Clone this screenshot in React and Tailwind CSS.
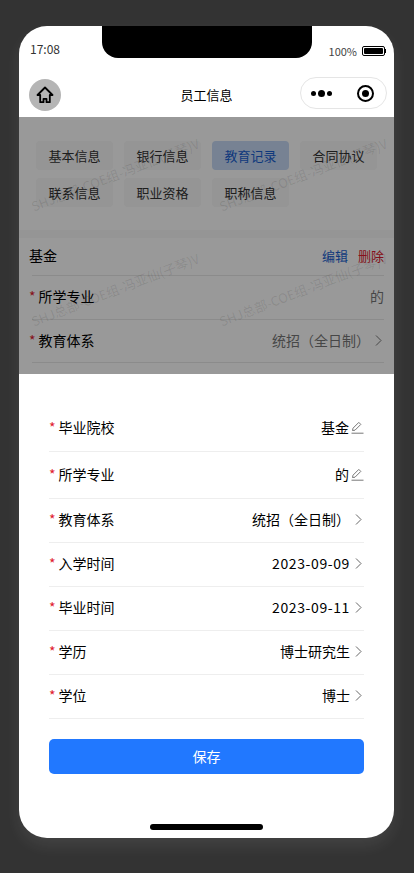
import React from 'react';

const font = { fontFamily: '"Noto Sans CJK SC", "Liberation Sans", sans-serif' };

const tabs = ['基本信息', '银行信息', '教育记录', '合同协议', '联系信息', '职业资格', '职称信息'];

const rows = [
  { label: '毕业院校', value: '基金', edit: true, h: 'h-[47px]' },
  { label: '所学专业', value: '的', edit: true, h: 'h-[47px]' },
  { label: '教育体系', value: '统招（全日制）', h: 'h-[44px]' },
  { label: '入学时间', value: '2023-09-09', date: true, h: 'h-[44px]' },
  { label: '毕业时间', value: '2023-09-11', date: true, h: 'h-[44px]' },
  { label: '学历', value: '博士研究生', h: 'h-[44px]' },
  { label: '学位', value: '博士', h: 'h-[44px]' },
];

const Watermark = ({ className }) => (
  <div className={`absolute text-[13px] leading-[20px] whitespace-nowrap text-black/10 -rotate-[21deg] origin-left ${className}`}>
    SHJ总部-COE组-冯亚仙(子琴)V
  </div>
);

const HomeIcon = () => (
  <svg width="18" height="18" viewBox="0 0 18 18" fill="none" stroke="#000" strokeWidth="1.8" strokeLinejoin="round">
    <path d="M9 1.5 1.5 9H4.2v7.2h3.3v-3.4h3v3.4h3.3V9h2.7z" />
  </svg>
);

const PenIcon = () => (
  <svg width="13" height="13" viewBox="0 0 13 13" fill="none" stroke="#777" strokeWidth="1">
    <path d="M1.5 9.5 2 7.2 7.8 1.4l2 2L4 9.2z" />
    <path d="M0.5 12.2h12" />
  </svg>
);

const Chevron = ({ color = '#666' }) => (
  <svg width="7" height="11" viewBox="0 0 7 11" fill="none" stroke={color} strokeWidth="1" className="mr-[2px]">
    <path d="M1 .5l5 5-5 5" />
  </svg>
);

const Battery = () => (
  <div className="flex items-center">
    <div className="w-[23px] h-[10px] border border-black rounded-[2px] p-[1px]">
      <div className="w-full h-full bg-black rounded-[1px]" />
    </div>
    <div className="w-[1px] h-[4px] bg-black" />
  </div>
);

const Capsule = () => (
  <div className="w-[87px] h-[32px] mt-[3px] border border-[#e5e5e5] rounded-full flex items-center justify-between pl-[10px] pr-[12px]">
    <div className="flex items-center gap-[2px]">
      <div className="w-[5px] h-[5px] rounded-full bg-black" />
      <div className="w-[7px] h-[7px] rounded-full bg-black" />
      <div className="w-[5px] h-[5px] rounded-full bg-black" />
    </div>
    <div className="w-[17px] h-[17px] rounded-full border-2 border-black flex items-center justify-center">
      <div className="w-[7px] h-[7px] rounded-full bg-black" />
    </div>
  </div>
);

const App = () => {
  return (
    <div className="w-[414px] h-[873px] bg-[#333333] pt-[26px] pl-[19px] overflow-hidden" style={font}>
      <div className="relative w-[375px] h-[812px] bg-white rounded-[28px] overflow-hidden flex flex-col shadow-[0_8px_16px_rgba(255,255,255,0.08)]">
        {/* 刘海 */}
        <div className="absolute top-0 left-[83px] w-[210px] h-[32px] bg-black rounded-b-[16px]" />

        <div className="h-[40px] flex justify-between px-[11px] shrink-0">
          <span className="text-[12px] leading-[16px] text-[#333] mt-[15px]">17:08</span>
          <div className="flex items-center gap-[5px] mt-[17px] h-[16px] mr-[-3px]">
            <span className="text-[11px] text-[#444]">100%</span>
            <Battery />
          </div>
        </div>

        <div className="h-[51px] relative flex items-center justify-between pl-[10px] pr-[7px] shrink-0">
          <div className="w-[32px] h-[32px] rounded-full bg-[#b5b5b5] flex items-center justify-center mt-[7px]">
            <HomeIcon />
          </div>
          <span className="absolute left-0 right-0 text-center text-[13px] text-black mt-[6px]">员工信息</span>
          <Capsule />
        </div>

        {/* 遮罩下的页面 */}
        <div className="relative h-[257px] shrink-0 overflow-hidden bg-white">
          <div className="grid grid-cols-[77px_77px_77px_77px] content-start gap-x-[11px] gap-y-[8px] pl-[17px] pt-[24px] h-[113px]">
            {tabs.map((t) => (
              <div
                key={t}
                className={`h-[29px] rounded-[4px] flex items-center justify-center text-[13px] ${t === '教育记录' ? 'bg-[#c6d9f5] text-[#1a5fd0]' : 'bg-[#f8f8f8] text-[#333]'}`}
              >
                {t}
              </div>
            ))}
          </div>
          <div className="h-[8px] bg-[#f8f8f8]" />
          <div className="flex items-center justify-between h-[37px] pl-[10px] pr-[10px] pb-[2px]">
            <span className="text-black text-[14px]">基金</span>
            <div className="flex gap-[10px] text-[13px]">
              <span className="text-[#1a5fd0]">编辑</span>
              <span className="text-[#e01b2f]">删除</span>
            </div>
          </div>
          <div className="h-[44px] ml-[13px] mr-[10px] pb-[2px] border-t border-[#e8e8e8] flex items-center justify-between text-[14px]">
            <span className="text-black -ml-[3px] flex items-center gap-[3px]"><span className="text-[#e01b2f]">*</span>所学专业</span>
            <span className="text-[#777]">的</span>
          </div>
          <div className="h-[44px] ml-[13px] mr-[10px] pb-[2px] border-t border-b border-[#e8e8e8] flex items-center justify-between text-[14px]">
            <span className="text-black -ml-[3px] flex items-center gap-[3px]"><span className="text-[#e01b2f]">*</span>教育体系</span>
            <span className="text-[#777] flex items-center gap-[5px]">统招（全日制）<Chevron color="#777" /></span>
          </div>
          <Watermark className="left-[13px] top-[80px]" />
          <Watermark className="left-[201px] top-[80px]" />
          <Watermark className="left-[13px] top-[195px]" />
          <Watermark className="left-[201px] top-[195px]" />
          <div className="absolute inset-0 bg-black/40" />
        </div>

        {/* 底部弹层 */}
        <div className="flex-1 flex flex-col px-[30px] relative">
          <div className="pt-[31px]">
            {rows.map((r) => (
              <div key={r.label} className={`${r.h} pb-[2px] border-b border-[#eeeeee] flex items-center justify-between text-[14px] text-black`}>
                <span className="flex items-center gap-[3px]"><span className="text-[#e01b2f]">*</span>{r.label}</span>
                <span className="flex items-center gap-[2px]">
                  <span className={r.date ? 'tracking-[0.6px]' : ''}>{r.value}</span>
                  {r.edit ? <PenIcon /> : <span className="ml-[3px] flex"><Chevron /></span>}
                </span>
              </div>
            ))}
          </div>
          <button className="mt-[20px] h-[35px] w-[315px] rounded-[5px] bg-[#2178ff] text-white text-[14px]">保存</button>
          <div className="absolute bottom-[8px] left-[131px] w-[113px] h-[6px] rounded-full bg-black" />
        </div>
      </div>
    </div>
  );
};

export default App;
